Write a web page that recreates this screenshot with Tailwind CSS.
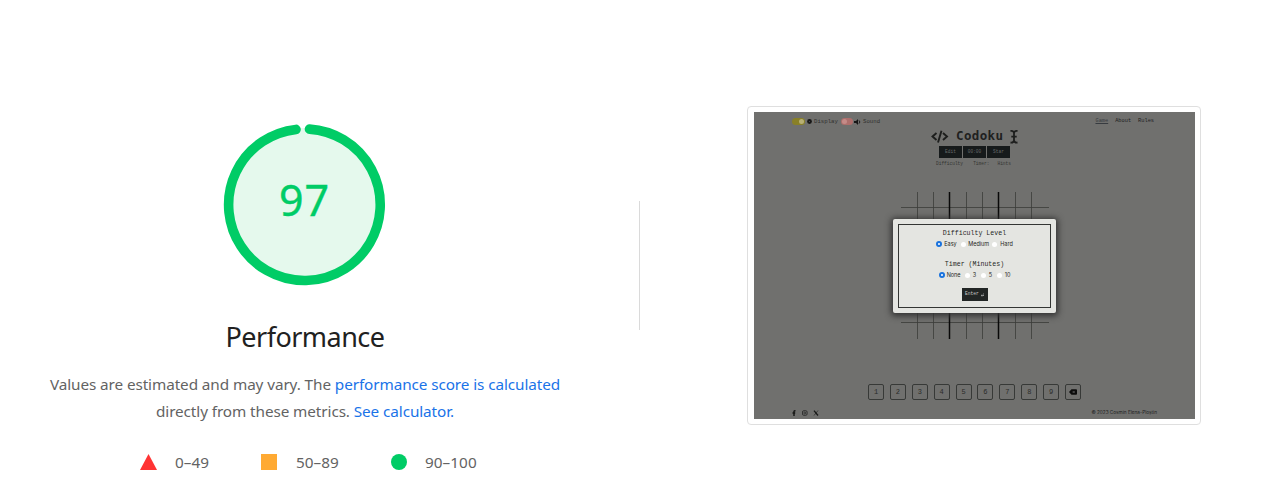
<!DOCTYPE html>
<html lang="en">
<head>
<meta charset="utf-8">
<title>Performance</title>
<script src="https://cdn.jsdelivr.net/npm/@tailwindcss/browser@4"></script>
</head>
<body class="flex h-[478px] w-[1276px] overflow-hidden bg-white font-['Noto_Sans','Open_Sans',sans-serif] text-[#636363]">
<section class="flex w-[610px] shrink-0 flex-col items-center pt-[123px]">
  <div class="grid h-[164px] w-[164px] place-items-center">
    <svg class="col-start-1 row-start-1" width="164" height="164" viewBox="0 0 164 164" fill="none">
      <circle cx="82" cy="82" r="77" fill="#e5f9ed"/>
      <path d="M86.500 6.100A75.800 75.800 0 1 1 73 6.400" stroke="#00cc66" stroke-width="9.6" stroke-linecap="round"/>
    </svg>
    <span class="col-start-1 row-start-1 -mt-[12px] -ml-[1px] text-[43px] leading-none tracking-[1px] text-[#0c6] [-webkit-text-stroke:0.4px_#0c6]">97</span>
  </div>
  <h1 class="mt-[30px] whitespace-nowrap text-[27px] leading-[40px] tracking-[-0.54px] text-[#212121]">Performance</h1>
  <p class="mt-[14px] whitespace-nowrap text-center text-[15.3px] leading-[27px] tracking-[-0.09px]">Values are estimated and may vary. The <a class="text-[#1a73e8]">performance score is calculated</a><br>directly from these metrics. <a class="text-[#1a73e8]">See calculator.</a></p>
  <div class="mt-[24px] ml-[140px] flex w-[338px] items-center self-start text-[15.3px] leading-[27px] tracking-[0.05px]">
    <div class="flex w-[121px] items-center gap-[18px]"><svg class="-mt-[2px]" width="17" height="16"><path d="M8.5 0 17 16H0Z" fill="#f33"/></svg><span>0–49</span></div>
    <div class="flex w-[130px] items-center gap-[19px]"><i class="-mt-[2px] size-4 bg-[#fa3]"></i><span>50–89</span></div>
    <div class="flex items-center gap-[18px]"><i class="-mt-[2px] size-4 rounded-full bg-[#0c6]"></i><span>90–100</span></div>
  </div>
</section>
<div class="ml-[29px] mt-[201px] h-[129px] w-px shrink-0 bg-[#dadada]"></div>
<figure class="ml-[107px] mt-[106px] h-[319px] w-[454px] shrink-0 rounded-[4px] border border-[#dfdfdf] px-[6px] pt-[5px]">
  <div class="relative flex h-[307px] w-[441px] flex-col overflow-hidden bg-[#70706e] font-['Liberation_Mono',monospace] text-[#20211f]">
    <header class="flex h-[17px] items-center pl-[38px] pr-[41px] pt-[2px] text-[5.7px] leading-none">
      <i class="flex h-[7px] w-[13px] items-center justify-end rounded-full bg-[#898027] pr-[1px]"><b class="size-[5px] rounded-full bg-[#b8b075]"></b></i>
      <svg class="ml-[2px]" width="5" height="5"><circle cx="2.5" cy="2.5" r="2.4" fill="#171717"/><circle cx="2.5" cy="2.5" r=".5" fill="#555"/></svg>
      <span class="ml-[2px] w-[27px] text-[#30312f]">Display</span>
      <i class="flex h-[7px] w-[12px] items-center rounded-full bg-[#ad6f6c] pl-[1px]"><b class="size-[5px] rounded-full bg-[#c58b88]"></b></i>
      <svg class="ml-[1px]" width="7" height="6"><path d="M0 2H2L4 0V6L2 4H0Z" fill="#161616"/><path d="M5 1.4Q6.8 3 5 4.6" fill="none" stroke="#161616" stroke-width=".9"/></svg>
      <span class="ml-[2px] text-[#30312f]">Sound</span>
      <nav class="ml-auto flex gap-[7px] pt-px text-[5.3px]"><a class="text-[#373b40] underline">Game</a><a>About</a><a>Rules</a></nav>
    </header>
    <div class="ml-[177px] flex h-[15px] items-center font-['DejaVu_Sans_Mono',monospace] font-bold">
      <svg width="18" height="14" viewBox="0 0 18 14" fill="none" stroke="#1d1e1d" stroke-width="1.9"><path d="M5.500 3 1.500 6.500 5.500 10M12 3l4 3.500L12 10M10.500 .7 7 12.500"/></svg>
      <span class="ml-[7px] w-[50px] text-[12.5px] leading-none tracking-[0.35px]">Codoku</span>
      <svg class="ml-[3px]" width="10" height="14" viewBox="0 0 10 14" fill="none" stroke="#1d1e1d" stroke-width="1.8"><path d="M1.500 1Q4.500 .500 5 3Q5.500 .500 8.500 1M5 3V10.500M2.300 6.700H7.700M1.500 12.500Q4.500 13 5 10.500Q5.500 13 8.500 12.500"/></svg>
    </div>
    <div class="ml-[185px] mt-[2px] flex gap-px text-center text-[4.500px] leading-[12px] text-[#666969]">
      <span class="h-[12px] w-[23px] bg-[#161a1b]">Edit</span><span class="h-[12px] w-[23px] bg-[#161a1b]">00:00</span><span class="h-[12px] w-[23px] bg-[#161a1b]">Star</span>
    </div>
    <div class="ml-[182px] mt-[2px] flex w-[75px] justify-between text-[4.5px] leading-[7px] text-[#353633]"><span>Difficulty</span><span class="ml-[2px]">Timer:</span><span>Hints</span></div>
    <svg class="ml-[147px] mt-[25px] shrink-0" width="148" height="147">
      <path d="M0 15.500H148M0 130.500H148M16.500 0V147M32.500 0V147M65.500 0V147M81.500 0V147M114.500 0V147M130.500 0V147" stroke="#3b3c3a" stroke-width=".8"/>
      <path d="M48.500 0V147M97.500 0V147" stroke="#090909" stroke-width="1.5"/>
    </svg>
    <div class="ml-[114px] mt-[45px] flex gap-[5.9px] text-center text-[7px] leading-[14px] text-[#2b2c2a]">
      <span class="size-[16px] rounded-[2px] border border-[#373937]">1</span><span class="size-[16px] rounded-[2px] border border-[#373937]">2</span><span class="size-[16px] rounded-[2px] border border-[#373937]">3</span><span class="size-[16px] rounded-[2px] border border-[#373937]">4</span><span class="size-[16px] rounded-[2px] border border-[#373937]">5</span><span class="size-[16px] rounded-[2px] border border-[#373937]">6</span><span class="size-[16px] rounded-[2px] border border-[#373937]">7</span><span class="size-[16px] rounded-[2px] border border-[#373937]">8</span><span class="size-[16px] rounded-[2px] border border-[#373937]">9</span>
      <span class="flex size-[16px] items-center justify-center rounded-[2px] border border-[#373937]"><svg width="8" height="6" viewBox="0 0 8 6"><path d="M0 3 2.500 .3H7Q8 .3 8 1V5Q8 5.700 7 5.700H2.500Z" fill="#0c0c0c"/><path d="M3.700 2 5.700 4M5.700 2 3.700 4" stroke="#777" stroke-width=".6"/></svg></span>
    </div>
    <footer class="mt-[9px] flex items-center pl-[38px] pr-[38px] text-[#20211f]">
      <svg width="28" height="6" fill="none" stroke="#181918"><path d="M2 6V1.500Q2 .7 3.500 .7M.5 3H3.200" stroke-width="1.500"/><rect x="10.500" y=".7" width="4.600" height="4.600" rx="1.300" stroke-width=".7"/><circle cx="12.800" cy="3" r="1" stroke-width=".6"/><path d="M22 .7 26 5.500" stroke-width="1.300"/><path d="M26 .5 22 5.500" stroke-width=".6"/></svg>
      <span class="ml-auto whitespace-nowrap font-['Inter',sans-serif] text-[4.700px] leading-[7px]">© 2023 Cosmin Elena-Ploștin</span>
    </footer>
    <div class="absolute left-[139px] top-[107px] h-[94px] w-[163px] rounded-[2px] bg-[#e4e5e1] p-[5px] shadow-[0_1px_6px_2px_#333]">
      <div class="flex h-[84px] flex-col items-center border border-[#333533] pt-[4px] text-[#252623]">
        <h2 class="text-[6.6px] leading-[9px]">Difficulty Level</h2>
        <div class="mt-[2px] flex h-[8px] items-center font-['Inter',sans-serif] text-[5.500px] leading-[8px]"><i class="mr-[2px] size-[6px] rounded-full border-2 border-[#1972dd] bg-white"></i><span class="w-[17px]">Easy</span><i class="mr-[2px] size-[5px] rounded-full bg-white"></i><span class="w-[24px]">Medium</span><i class="mr-[3px] size-[5px] rounded-full bg-white"></i><span>Hard</span></div>
        <h2 class="mt-[12px] text-[6.6px] leading-[9px]">Timer (Minutes)</h2>
        <div class="mt-[2px] flex h-[8px] items-center font-['Inter',sans-serif] text-[5.500px] leading-[8px]"><i class="mr-[2px] size-[6px] rounded-full border-2 border-[#1972dd] bg-white"></i><span class="w-[18px]">None</span><i class="mr-[3px] size-[5px] rounded-full bg-white"></i><span class="w-[8px]">3</span><i class="mr-[3px] size-[5px] rounded-full bg-white"></i><span class="w-[8px]">5</span><i class="mr-[3px] size-[5px] rounded-full bg-white"></i><span>10</span></div>
        <div class="mt-[9px] flex h-[13px] w-[26px] items-center justify-center gap-[2px] bg-[#222625] text-[4.600px] leading-none text-[#ccc]"><span>Enter</span><svg width="3" height="4" fill="none" stroke="#ccc" stroke-width=".6"><path d="M3 0V2.500H0M1 1.500 0 2.500 1 3.500"/></svg></div>
      </div>
    </div>
  </div>
</figure>
</body>
</html>
